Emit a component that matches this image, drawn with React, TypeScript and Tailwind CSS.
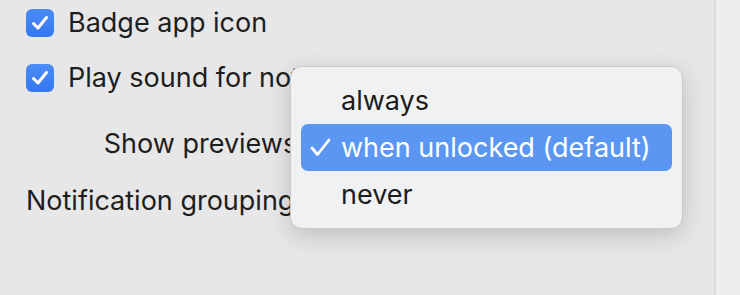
import React from 'react';

const font = { fontFamily: 'Inter, "Noto Sans", sans-serif' };

function Checkbox() {
  return (
    <span className="flex h-[28px] w-[28px] shrink-0 items-center justify-center rounded-[6px] bg-gradient-to-b from-[#4a8cf8] to-[#3477ee]">
      <svg width="18" height="16" viewBox="0 0 18 16" fill="none">
        <path d="M2.5 8.5 L7 13 L15.5 2.5" stroke="white" strokeWidth="3" strokeLinecap="round" strokeLinejoin="round" />
      </svg>
    </span>
  );
}

const items = [
  { label: 'always', selected: false },
  { label: 'when unlocked (default)', selected: true },
  { label: 'never', selected: false },
];

function PopupMenu() {
  return (
    <div className="absolute left-[290px] top-[66px] w-[393px] rounded-[12px] border border-[#c9c9c9] bg-[#f0f1f2] px-[10px] py-[10px] shadow-[0_6px_24px_rgba(0,0,0,0.18)]">
      {items.map((it) => (
        <div
          key={it.label}
          className={
            it.selected
              ? 'flex h-[47px] items-center rounded-[7px] bg-[#5b97f2] text-white'
              : 'flex h-[47px] items-center text-[#1c1c1c]'
          }
        >
          <span className="flex w-[40px] shrink-0 justify-center pr-[2px]">
            {it.selected && (
              <svg width="21" height="19" viewBox="0 0 21 19" fill="none">
                <path d="M2 10 L7.5 16.5 L19 2" stroke="white" strokeWidth="2.8" strokeLinecap="round" strokeLinejoin="round" />
              </svg>
            )}
          </span>
          <span className="text-[27px] leading-none">{it.label}</span>
        </div>
      ))}
    </div>
  );
}

export default function App() {
  return (
    <div className="relative flex h-[295px] w-[740px] overflow-hidden bg-[#e7e7e7]" style={font}>
      {/* the open popup sits over the right ends of these labels, as in the screenshot */}
      <div className="flex flex-1 flex-col pl-[26px] pt-[8px] text-[27px] leading-none text-[#1e1e1e]">
        <div className="flex h-[29px] items-center gap-[14px]">
          <Checkbox />
          <span>Badge app icon</span>
        </div>
        <div className="mt-[26px] flex h-[29px] items-center gap-[14px]">
          <Checkbox />
          <span className="whitespace-nowrap">Play sound for notifications</span>
        </div>
        <div className="mt-[36px] flex h-[30px] w-[279px] items-center justify-end">
          <span className="whitespace-nowrap">Show previews:</span>
        </div>
        <div className="mt-[27px] flex h-[30px] items-center">
          <span className="whitespace-nowrap">Notification grouping:</span>
        </div>
      </div>
      <div className="w-[26px] border-l-[2px] border-[#dcdcdc] bg-[#eeeeee]" />
      <PopupMenu />
    </div>
  );
}
